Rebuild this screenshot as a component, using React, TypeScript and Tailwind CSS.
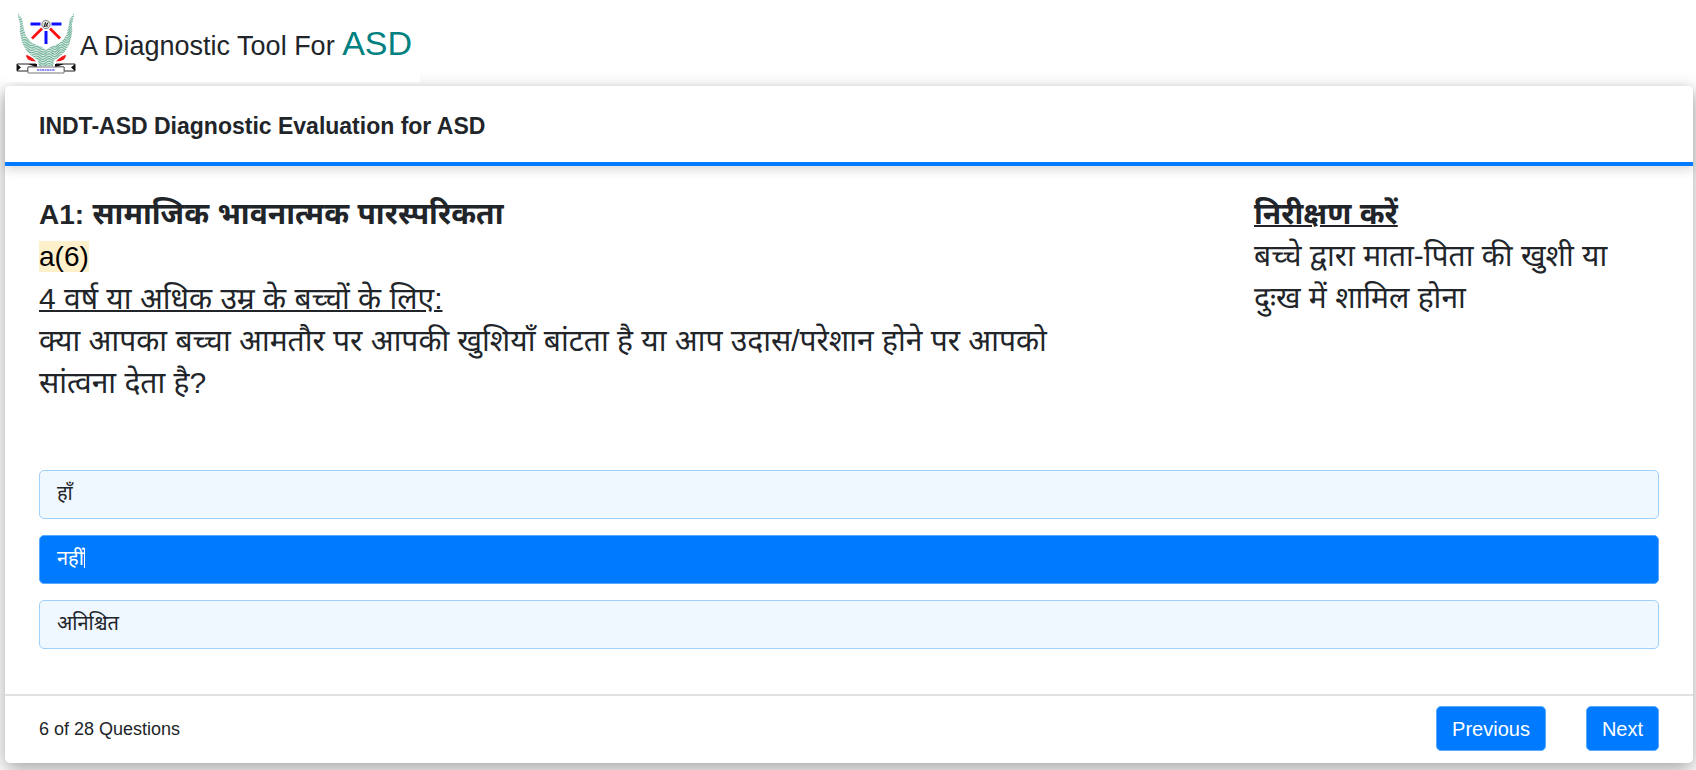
import { useState } from "react";

const options = ["हाँ", "नहीं", "अनिश्चित"];

const featherRows = Array.from({ length: 23 }, (_, i) => 1 + i * 2.4);

function Logo() {
  return (
    <svg viewBox="0 0 60 62" className="h-[62px] w-[60px] shrink-0" role="img" aria-label="Institute emblem">
      <defs>
        <clipPath id="horns">
          <path d="M2 1L6 7Q7 14 9 21Q11 28 18 32Q25 34 30 38Q35 34 42 32Q49 28 51 21Q53 14 54 7L58 1Q58 6 56 12Q57 19 55 26Q54 32 50 38Q44 45 38 48L37 54H23L22 48Q16 45 10 38Q6 32 5 26Q3 19 4 12Q2 6 2 1Z" />
        </clipPath>
      </defs>
      <g clipPath="url(#horns)">
        <path d="M0 0h60v55h-60z" fill="#d9ece4" />
        <g fill="none" stroke="#74b39b" strokeWidth="1.1">
          {featherRows.map((y) => (
            <path key={y} d={`M0 ${y}q3 3 6 1t6 1t6 1t6 1t6 0t6 0t6 -1t6 -1t6 -1t6 -1`} />
          ))}
        </g>
      </g>
      <path d="M14.500 12h10M35.500 12h10M30 19v13" stroke="#1010ff" strokeWidth="3" />
      <path d="M26 16.500l-10 10M34 16.500l10 10" stroke="#ff1010" strokeWidth="2.8" />
      <circle cx="30" cy="12.500" r="4.200" fill="#ddd" stroke="#888" />
      <path d="M28 15l1.500-4.500 1 3 1.500-3M28 14h4" fill="none" stroke="#222" strokeWidth="1" />
      <path d="M10 43q4 0 10 6.500q-5 0-8-2q-2-2-2-4.500zM50 43q-4 0-10 6.500q5 0 8-2q2-2 2-4.500z" fill="#f01818" />
      <path d="M1 52h19v3h-8v4h-11zM59 52h-19v3h8v4h11z" fill="#fff" stroke="#222" />
      <path d="M1 52l4 3.500-4 3.500zM59 52l-4 3.500 4 3.500zM12 52h9v3.500zM48 52h-9v3.500z" fill="#111" />
      <path d="M12 55h36v6h-36z" fill="#fff" stroke="#777" />
      <path d="M21 58h18" stroke="#6a6aff" strokeWidth="1.6" strokeDasharray="2 .5" />
    </svg>
  );
}

export default function App() {
  const [selected, setSelected] = useState(1);
  return (
    <div className="min-h-[770px] overflow-hidden bg-white font-['Liberation_Sans','Noto_Sans_Devanagari','Noto_Sans',sans-serif] text-[#212529]">
      <header className="relative z-10 ml-[7px] flex h-[82px] w-[413px] items-start bg-white pt-3 pl-[9px]">
        <Logo />
        <h1 className="ml-1 pt-[11px] text-[27px] leading-[40px] whitespace-nowrap">
          A Diagnostic Tool For <span className="text-[34px] text-[#008080]">ASD</span>
        </h1>
      </header>
      <main className="mx-[5px] mt-1 mr-[3px] rounded-[5px] bg-white shadow-[0_7px_20px_rgba(0,0,0,0.35)]">
        <div className="border-b-4 border-[#007bff] px-[34px] pt-[22px] pb-[18px] shadow-[0_4px_10px_rgba(0,0,0,0.15)]">
          <h2 className="text-[23px] leading-9 font-bold">INDT-ASD Diagnostic Evaluation for ASD</h2>
        </div>
        <div className="px-[34px] pt-[27px] pb-[45px]">
          <div className="flex min-h-[277px] justify-between text-[30px] leading-[42px]">
            <section className="w-[63%]">
              <h3 className="font-bold"><span className="text-[28px]">A1:</span> सामाजिक भावनात्मक पारस्परिकता</h3>
              <p className="text-[28px]"><mark className="bg-[#fff0cc] text-black">a(6)</mark></p>
              <p className="underline decoration-2">4 वर्ष या अधिक उम्र के बच्चों के लिए:</p>
              <p>क्या आपका बच्चा आमतौर पर आपकी खुशियाँ बांटता है या आप उदास/परेशान होने पर आपको सांत्वना देता है?</p>
            </section>
            <aside className="w-1/4">
              <h3 className="font-bold underline decoration-2">निरीक्षण करें</h3>
              <p>बच्चे द्वारा माता-पिता की खुशी या दुःख में शामिल होना</p>
            </aside>
          </div>
          <div className="flex flex-col gap-4">
            {options.map((label, i) => (
              <button
                key={label}
                type="button"
                aria-pressed={selected === i}
                onClick={() => setSelected(i)}
                className={`flex h-[49px] items-center rounded-[5px] border px-[17px] pb-1 text-left text-[20px] leading-7 ${selected === i ? "border-[#58a9ff] bg-[#007bff] text-white" : "border-[#9fd0fb] bg-[#eff7ff]"}`}
              >
                {label}
                {selected === i && <span aria-hidden="true" className="h-5 w-px bg-white" />}
              </button>
            ))}
          </div>
        </div>
        <footer className="flex items-center justify-between border-t-2 border-[#e2e2e2] px-[34px] pt-[10px] pb-3">
          <p className="text-[18px] leading-7">6 of 28 Questions</p>
          <div className="flex gap-10">
            <button type="button" className="h-[45px] rounded-[5px] border border-[#58a9ff] bg-[#007bff] px-[15px] text-[20px] text-white">Previous</button>
            <button type="button" className="h-[45px] rounded-[5px] border border-[#58a9ff] bg-[#007bff] px-[15px] text-[20px] text-white">Next</button>
          </div>
        </footer>
      </main>
    </div>
  );
}
